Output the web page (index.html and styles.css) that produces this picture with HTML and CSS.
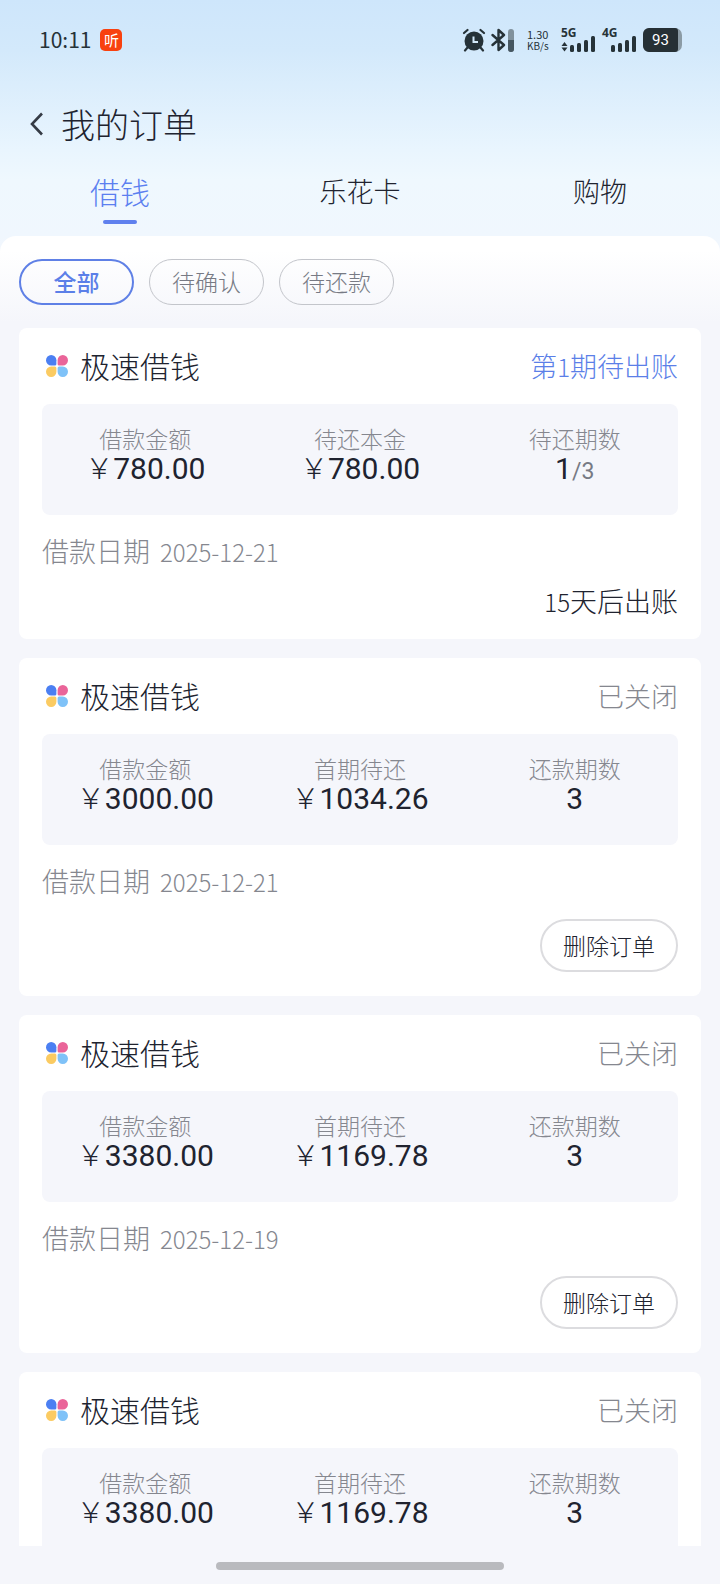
FILE: index.html
```html
<!DOCTYPE html>
<html lang="zh-CN">
<head>
    <meta charset="UTF-8">
    <meta name="viewport" content="width=device-width, initial-scale=1.0">
    <title>我的订单</title>
    <link rel="stylesheet" href="styles.css">
</head>
<body>
    <svg class="defs" aria-hidden="true">
        <symbol id="clover" viewBox="0 0 22 22">
            <path fill="#4b7ff2" d="M5.2 0A5.2 5.2 0 0 1 10.4 5.2V8.9A1.5 1.5 0 0 1 8.9 10.4H5.2A5.2 5.2 0 0 1 5.2 0Z"/>
            <path fill="#ea6499" d="M16.8 0A5.2 5.2 0 0 0 11.6 5.2V8.9A1.5 1.5 0 0 0 13.1 10.4H16.8A5.2 5.2 0 0 0 16.8 0Z"/>
            <path fill="#fbcb62" d="M5.2 22A5.2 5.2 0 0 0 10.4 16.8V13.1A1.5 1.5 0 0 0 8.9 11.6H5.2A5.2 5.2 0 0 0 5.2 22Z"/>
            <path fill="#7fc2f8" d="M16.8 22A5.2 5.2 0 0 1 11.6 16.8V13.1A1.5 1.5 0 0 1 13.1 11.6H16.8A5.2 5.2 0 0 1 16.8 22Z"/>
        </symbol>
    </svg>

    <div class="app">
        <div class="status-bar">
            <span class="time">10:11</span>
            <span class="app-badge">听</span>
            <div class="status-icons">
                <svg class="alarm" viewBox="0 0 24 24" width="24" height="24">
                    <circle cx="12" cy="13" r="9.5" fill="#263238"/>
                    <path d="M2 5L5.500 2M22 5L18.500 2M5.500 19.500L3 22.500M18.500 19.500L21 22.500" stroke="#263238" stroke-width="2.2" stroke-linecap="round"/>
                    <path d="M11.500 8.500V14H16" fill="none" stroke="#d4eafa" stroke-width="2"/>
                </svg>
                <svg class="bluetooth" viewBox="0 0 24 24" width="24" height="24">
                    <path d="M1.5 7L13 17L7.5 22V2L13 7L1.5 17" fill="none" stroke="#263238" stroke-width="2.4" stroke-linejoin="round" stroke-linecap="round"/>
                    <rect x="17" y="1" width="6" height="23" rx="3" fill="#80919c"/>
                    <path d="M17 12H23V21A3 3 0 0 1 17 21Z" fill="#465761"/>
                </svg>
                <div class="net-speed"><span>1.30</span><small>KB/s</small></div>
                <div class="signal">
                    <span class="signal-label">5G</span>
                    <svg viewBox="0 0 36 24" width="36" height="24" fill="#263238">
                        <path d="M3.5 14L6.5 18H.5ZM3.5 23.5L6.5 19.5H.5Z"/>
                        <rect x="9" y="17" width="4" height="7" rx="1.5"/>
                        <rect x="16" y="15" width="4" height="9" rx="1.5"/>
                        <rect x="23" y="12" width="4" height="12" rx="1.5"/>
                        <rect x="30" y="8" width="4" height="16" rx="1.5"/>
                    </svg>
                </div>
                <div class="signal">
                    <span class="signal-label">4G</span>
                    <svg viewBox="0 0 36 24" width="36" height="24" fill="#263238">
                        <rect x="9" y="17" width="4" height="7" rx="1.5"/>
                        <rect x="16" y="15" width="4" height="9" rx="1.5"/>
                        <rect x="23" y="12" width="4" height="12" rx="1.5"/>
                        <rect x="30" y="8" width="4" height="16" rx="1.5"/>
                    </svg>
                </div>
                <span class="battery"><span class="battery-level">93</span></span>
            </div>
        </div>

        <header class="title-bar">
            <button class="back" aria-label="返回">
                <svg viewBox="0 0 14 24" width="14" height="24">
                    <path d="M12 1.5L2 12L12 22.5" fill="none" stroke="#353b45" stroke-width="2.6"/>
                </svg>
            </button>
            <h1>我的订单</h1>
        </header>

        <nav class="tabs">
            <a href="#" class="tab active">借钱</a>
            <a href="#" class="tab">乐花卡</a>
            <a href="#" class="tab">购物</a>
        </nav>

        <main class="sheet">
            <div class="filters">
                <button class="chip active">全部</button>
                <button class="chip">待确认</button>
                <button class="chip">待还款</button>
            </div>

            <section class="order">
                <div class="order-head">
                    <svg class="logo"><use href="#clover"/></svg>
                    <h2>极速借钱</h2>
                    <span class="state pending">第<small>1</small>期待出账</span>
                </div>
                <dl class="summary">
                    <div><dt>借款金额</dt><dd><span class="yen">￥</span>780.00</dd></div>
                    <div><dt>待还本金</dt><dd><span class="yen">￥</span>780.00</dd></div>
                    <div><dt>待还期数</dt><dd>1<span class="total">/3</span></dd></div>
                </dl>
                <p class="date">借款日期 <small>2025-12-21</small></p>
                <p class="due"><small>15</small>天后出账</p>
            </section>

            <section class="order">
                <div class="order-head">
                    <svg class="logo"><use href="#clover"/></svg>
                    <h2>极速借钱</h2>
                    <span class="state">已关闭</span>
                </div>
                <dl class="summary">
                    <div><dt>借款金额</dt><dd><span class="yen">￥</span>3000.00</dd></div>
                    <div><dt>首期待还</dt><dd><span class="yen">￥</span>1034.26</dd></div>
                    <div><dt>还款期数</dt><dd>3</dd></div>
                </dl>
                <p class="date">借款日期 <small>2025-12-21</small></p>
                <div class="actions"><button class="delete">删除订单</button></div>
            </section>

            <section class="order">
                <div class="order-head">
                    <svg class="logo"><use href="#clover"/></svg>
                    <h2>极速借钱</h2>
                    <span class="state">已关闭</span>
                </div>
                <dl class="summary">
                    <div><dt>借款金额</dt><dd><span class="yen">￥</span>3380.00</dd></div>
                    <div><dt>首期待还</dt><dd><span class="yen">￥</span>1169.78</dd></div>
                    <div><dt>还款期数</dt><dd>3</dd></div>
                </dl>
                <p class="date">借款日期 <small>2025-12-19</small></p>
                <div class="actions"><button class="delete">删除订单</button></div>
            </section>

            <section class="order">
                <div class="order-head">
                    <svg class="logo"><use href="#clover"/></svg>
                    <h2>极速借钱</h2>
                    <span class="state">已关闭</span>
                </div>
                <dl class="summary">
                    <div><dt>借款金额</dt><dd><span class="yen">￥</span>3380.00</dd></div>
                    <div><dt>首期待还</dt><dd><span class="yen">￥</span>1169.78</dd></div>
                    <div><dt>还款期数</dt><dd>3</dd></div>
                </dl>
            </section>
        </main>

        <footer class="home-bar"><span></span></footer>
    </div>
</body>
</html>
```
FILE: styles.css
```css
* {
    box-sizing: border-box;
}

body {
    margin: 0;
    font-family: "Noto Sans CJK SC", sans-serif;
    font-weight: 300;
    color: #20232f;
    background: #f5f6fb;
}

h1, h2, p, dl, dd {
    margin: 0;
    font-weight: 300;
}

button {
    padding: 0;
    border: none;
    background: none;
    font: inherit;
    color: inherit;
    cursor: pointer;
}

small {
    font-size: 24px;
    line-height: 24px;
}

.defs {
    display: none;
}

.app {
    display: flex;
    flex-direction: column;
    height: 100vh;
    background: linear-gradient(#cee6fb 0, #d3e9fb 50px, #e9f5fe 150px, #eff8fe 180px, #f0f7fe 236px, #f5f6fb 270px);
}

/* status bar */
.status-bar {
    display: flex;
    align-items: center;
    flex-shrink: 0;
    height: 80px;
    padding: 0 38px 0 39px;
    color: #263238;
}

.time {
    font-size: 21px;
    font-weight: 400;
    line-height: 30px;
    padding-bottom: 2px;
}

.app-badge {
    width: 22px;
    margin-left: 9px;
    border-radius: 5px;
    background: #f8410f;
    color: #fff;
    font-size: 15px;
    font-weight: 400;
    line-height: 22px;
    text-align: center;
}

.status-icons {
    display: flex;
    align-items: center;
    margin-left: auto;
}

.status-icons svg {
    display: block;
}

.bluetooth {
    margin-left: 5px;
}

.net-speed {
    display: flex;
    flex-direction: column;
    width: 24px;
    margin: 0 10px 0 12px;
    font-size: 11px;
    line-height: 12px;
    font-weight: 400;
    white-space: nowrap;
}

.net-speed small {
    font-size: 10px;
    line-height: 12px;
}

.signal {
    position: relative;
    margin-right: 5px;
}

.signal-label {
    position: absolute;
    top: -1px;
    left: 0;
    font: bold 12px/12px "Noto Sans", sans-serif;
}

.battery {
    display: flex;
    width: 39px;
    border-radius: 7px;
    background: #8b9ba5;
}

.battery-level {
    width: 35px;
    border-radius: 6px 3px 3px 6px;
    background: #263035;
    color: #fff;
    font: 15px/24px Roboto, sans-serif;
    text-align: center;
}

/* header */
.title-bar {
    display: flex;
    align-items: center;
    flex-shrink: 0;
    height: 88px;
    padding-left: 30px;
}

.back {
    display: flex;
}

.title-bar h1 {
    margin-left: 17px;
    font-size: 34px;
    line-height: 48px;
}

.tabs {
    display: grid;
    grid-template-columns: repeat(3, 1fr);
    flex-shrink: 0;
    height: 68px;
}

.tab {
    display: flex;
    flex-direction: column;
    align-items: center;
    color: #20232f;
    font-size: 27px;
    line-height: 46px;
    text-decoration: none;
}

.tab.active {
    color: #5b7ff0;
    font-size: 30px;
}

.tab.active::after {
    content: "";
    width: 34px;
    height: 4px;
    margin-top: 6px;
    border-radius: 2px;
    background: #5f80ee;
}

/* order list */
.sheet {
    flex: 1;
    min-height: 0;
    padding: 0 19px;
    border-radius: 16px 16px 0 0;
    overflow-y: auto;
    scrollbar-width: none;
    background: linear-gradient(#fff 0, #fff 14px, #f5f6fb 86px);
}

.filters {
    display: flex;
    gap: 15px;
    padding: 23px 0;
}

.chip {
    width: 115px;
    height: 46px;
    padding-bottom: 2px;
    border: 1px solid #c3c5cb;
    border-radius: 23px;
    color: #777a84;
    font-size: 23px;
    line-height: 32px;
}

.chip.active {
    border: 2px solid #5f80e6;
    color: #5b7fe8;
    font-weight: 500;
}

.order {
    margin-bottom: 19px;
    padding: 0 23px;
    border-radius: 8px;
    background: #fff;
}

.order-head {
    display: flex;
    align-items: center;
    height: 76px;
}

.logo {
    width: 22px;
    height: 22px;
    margin: 0 12px 0 4px;
}

.order-head h2 {
    padding-bottom: 2px;
    font-size: 30px;
    line-height: 44px;
}

.state {
    margin-left: auto;
    color: #85878f;
    font-size: 27px;
    line-height: 38px;
}

.state.pending {
    color: #5b7fe8;
}

.summary {
    display: grid;
    grid-template-columns: repeat(3, 1fr);
    gap: 8px;
    height: 111px;
    padding-top: 20px;
    border-radius: 8px;
    background: #f5f6fb;
    text-align: center;
}

.summary dt {
    color: #85878f;
    font-size: 23px;
    line-height: 29px;
}

.summary dd {
    font: 30px/32px Roboto, sans-serif;
}

.yen {
    font: 300 28px/24px "Noto Sans CJK SC", sans-serif;
}

.total {
    color: #777a84;
    font-size: 23px;
    line-height: 24px;
}

.date {
    padding-top: 17px;
    color: #85878f;
    font-size: 27px;
    line-height: 38px;
}

.date small {
    margin-left: 4px;
}

.due {
    padding: 12px 0 19px;
    font-size: 27px;
    line-height: 38px;
    text-align: right;
}

.actions {
    display: flex;
    justify-content: flex-end;
    padding: 19px 0 24px;
}

.delete {
    width: 138px;
    height: 53px;
    padding-bottom: 2px;
    border: 2px solid #dcdcdf;
    border-radius: 27px;
    font-size: 23px;
}

.home-bar {
    display: flex;
    justify-content: center;
    flex-shrink: 0;
    height: 38px;
    padding-top: 16px;
    background: #f5f6fb;
}

.home-bar span {
    width: 40%;
    height: 8px;
    border-radius: 4px;
    background: #b9babe;
}
```
